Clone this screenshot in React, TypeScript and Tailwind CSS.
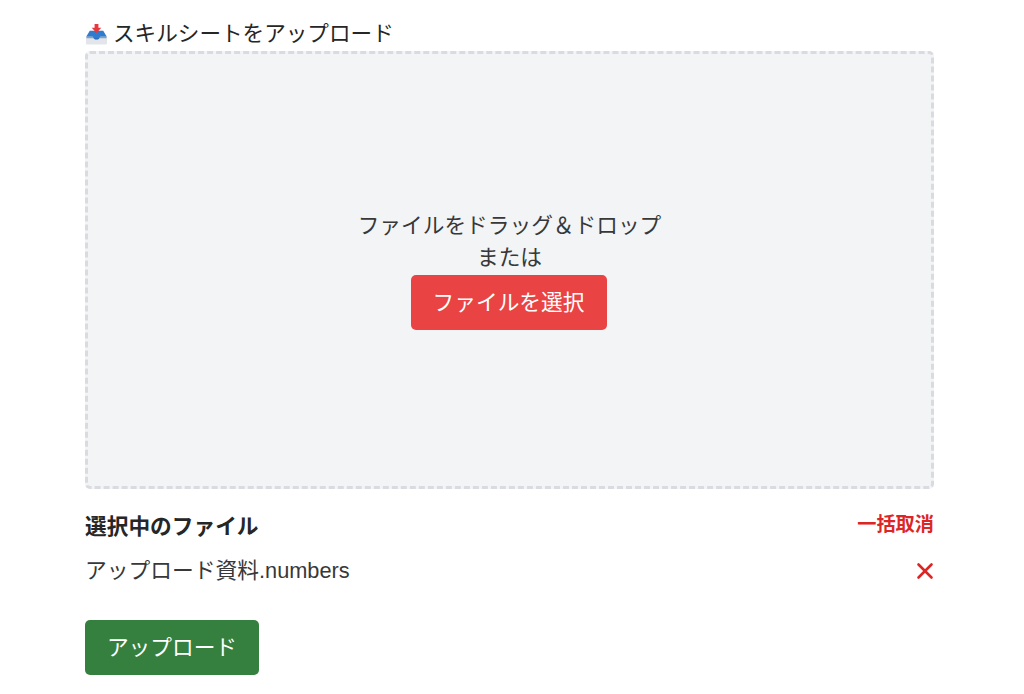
import { X } from 'lucide-react';

function InboxEmoji() {
  return (
    <svg viewBox="0 0 24 24" className="h-[23px] w-[23px] shrink-0">
      <path d="M1 14 L5 8 H19 L23 14 V21 a1.5 1.5 0 0 1 -1.5 1.5 H2.5 A1.5 1.5 0 0 1 1 21 Z" fill="#e3e5ea" />
      <path d="M5 8 H19 L22.5 14 H16 Q15 17 12 17 Q9 17 8 14 H1.5 Z" fill="#2f7bd0" />
      <path d="M1.5 14 H8 Q9 17.5 12 17.5 Q15 17.5 16 14 H22.5 V16 H1.5 Z" fill="#1f5fa8" opacity="0.5" />
      <path d="M10 1 H14 V5 H17 L12 10.5 L7 5 H10 Z" fill="#e5393f" />
    </svg>
  );
}

export default function App() {
  return (
    <div className="h-[694px] w-[1024px] overflow-hidden bg-white font-['Liberation_Sans','Noto_Sans_CJK_JP',sans-serif] text-[21.7px] leading-[32px] text-[#262626]">
      <div className="ml-[85px] w-[849px] pt-[17px]">
        <div className="flex h-[34px] items-center gap-[5px]">
          <InboxEmoji />
          <span className="text-[21.6px]">スキルシートをアップロード</span>
        </div>

        {/* Drop zone */}
        <div className="flex h-[438px] flex-col items-center justify-center rounded-[5px] border-[3px] border-dashed border-[#d9dbe0] bg-[#f3f4f6] text-[#383838]">
          <p>ファイルをドラッグ＆ドロップ</p>
          <p>または</p>
          <button className="mt-[1px] flex h-[55px] w-[196px] -translate-x-[1px] items-center justify-center rounded-[5px] bg-[#ea4343] text-white">
            ファイルを選択
          </button>
        </div>

        <div className="mt-[22px] flex items-start justify-between">
          <h2 className="font-bold text-[#262626]">選択中のファイル</h2>
          <button className="-mt-[2px] text-[19.2px] leading-[32px] font-bold text-[#dc2626]">一括取消</button>
        </div>

        <div className="mt-[12px] flex items-center justify-between">
          <span className="text-[21.75px] text-[#383838]">アップロード資料.numbers</span>
          <X className="mr-[-4px] h-[26px] w-[26px] text-[#dc2626]" strokeWidth={2.4} />
        </div>

        <button className="mt-[33px] flex h-[55px] w-[174px] items-center justify-center rounded-[5px] bg-[#35803f] text-white">
          アップロード
        </button>
      </div>
    </div>
  );
}
